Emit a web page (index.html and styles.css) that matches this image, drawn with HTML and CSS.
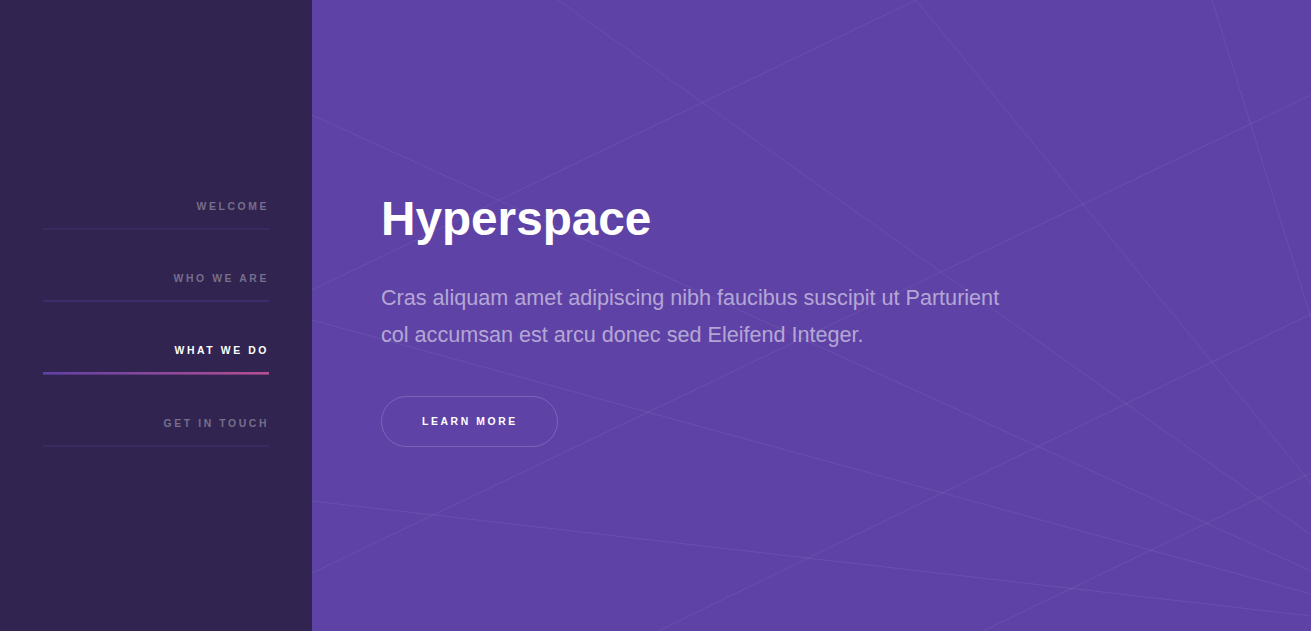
FILE: index.html
```html
<!DOCTYPE html>
<html lang="en">
<head>
<meta charset="utf-8">
<title>Hyperspace</title>
<link rel="stylesheet" href="styles.css">
</head>
<body>
<div class="page">
  <aside class="sidebar">
    <nav class="nav">
      <ul class="nav-list">
        <li class="nav-item"><a class="nav-link" href="#intro">Welcome</a></li>
        <li class="nav-item"><a class="nav-link nav-link-hover" href="#one">Who we are</a></li>
        <li class="nav-item"><a class="nav-link nav-link-active" href="#two">What we do</a></li>
        <li class="nav-item"><a class="nav-link" href="#three">Get in touch</a></li>
      </ul>
    </nav>
  </aside>
  <main class="main">
    <svg class="bg-lines" viewBox="0 0 999 631" preserveAspectRatio="none" aria-hidden="true">
      <g stroke="rgba(255,255,255,0.075)" stroke-width="1" fill="none">
        <line x1="246" y1="0" x2="999" y2="535"/>
        <line x1="604" y1="0" x2="999" y2="483"/>
        <line x1="900" y1="0" x2="999" y2="318"/>
        <line x1="0" y1="115" x2="999" y2="571"/>
        <line x1="0" y1="290" x2="604" y2="0"/>
        <line x1="0" y1="320" x2="999" y2="594"/>
        <line x1="0" y1="573" x2="999" y2="95"/>
        <line x1="0" y1="501" x2="999" y2="616"/>
        <line x1="346" y1="631" x2="999" y2="314"/>
        <line x1="671" y1="631" x2="999" y2="473"/>
      </g>
    </svg>
    <section class="intro">
      <h1 class="title">Hyperspace</h1>
      <p class="lead">Cras aliquam amet adipiscing nibh faucibus suscipit ut Parturient<br>col accumsan est arcu donec sed Eleifend Integer.</p>
      <a class="button" href="#one">Learn More</a>
    </section>
  </main>
</div>
</body>
</html>
```
FILE: styles.css
```css
* { box-sizing: border-box; }
html, body { margin: 0; padding: 0; height: 100%; }
body {
  font-family: "Liberation Sans", Arial, Helvetica, sans-serif;
  background: #312450;
  color: rgba(255,255,255,0.55);
  overflow: hidden;
}
.page {
  display: flex;
  height: 100vh;
}
.sidebar {
  width: 312px;
  flex: 0 0 312px;
  background: #312450;
  padding: 158px 43px 0 43px;
}
.nav-list {
  list-style: none;
  margin: 0;
  padding: 0;
}
.nav-item {
  margin-top: 26px;
}
.nav-link {
  display: block;
  text-align: right;
  text-decoration: none;
  text-transform: uppercase;
  font-size: 10.4px;
  font-weight: bold;
  letter-spacing: 2.6px;
  line-height: 18.2px;
  padding: 14px 0;
  color: rgba(255,255,255,0.35);
  background: linear-gradient(#3a2a60, #3a2a60) left bottom / 100% 2.2px no-repeat;
}
.nav-link-hover {
  background: linear-gradient(#3e2d6b, #3e2d6b) left bottom / 100% 2.4px no-repeat;
}
.nav-link-active {
  color: #ffffff;
  background: linear-gradient(to right, #5e42a6, #b74e91) left bottom / 100% 2.6px no-repeat;
}
.main {
  position: relative;
  flex: 1;
  background: #5e42a6;
  overflow: hidden;
}
.bg-lines {
  position: absolute;
  inset: 0;
  width: 100%;
  height: 100%;
}
.intro {
  position: relative;
  padding: 183px 0 0 69px;
}
.title {
  margin: 0 0 24px 0;
  color: #ffffff;
  font-size: 47.7px;
  font-weight: bold;
  line-height: 1.5;
}
.lead {
  margin: 0 0 43px 0;
  font-size: 21.6px;
  line-height: 37.2px;
  color: rgba(255,255,255,0.55);
}
.button {
  display: inline-block;
  height: 51px;
  line-height: 49px;
  padding: 0 39px 0 40px;
  border: 1px solid rgba(255,255,255,0.18);
  border-radius: 26px;
  color: #ffffff;
  text-decoration: none;
  text-transform: uppercase;
  font-size: 10.4px;
  font-weight: bold;
  letter-spacing: 2.6px;
}
```
